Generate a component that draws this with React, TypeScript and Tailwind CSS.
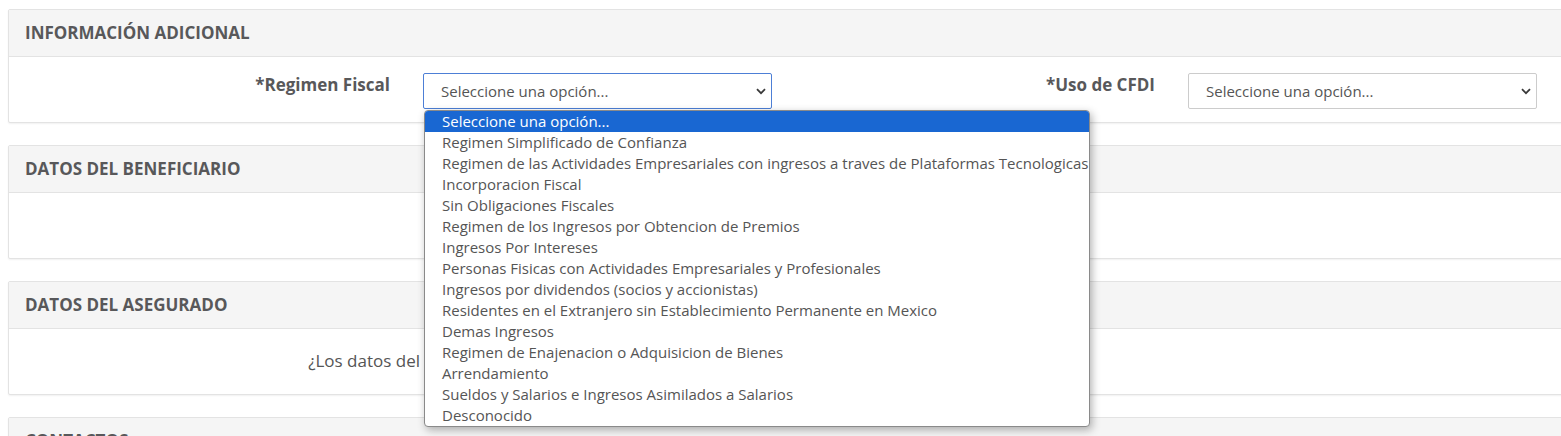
import React from 'react';

const options = [
  'Seleccione una opción...',
  'Regimen Simplificado de Confianza',
  'Regimen de las Actividades Empresariales con ingresos a traves de Plataformas Tecnologicas',
  'Incorporacion Fiscal',
  'Sin Obligaciones Fiscales',
  'Regimen de los Ingresos por Obtencion de Premios',
  'Ingresos Por Intereses',
  'Personas Fisicas con Actividades Empresariales y Profesionales',
  'Ingresos por dividendos (socios y accionistas)',
  'Residentes en el Extranjero sin Establecimiento Permanente en Mexico',
  'Demas Ingresos',
  'Regimen de Enajenacion o Adquisicion de Bienes',
  'Arrendamiento',
  'Sueldos y Salarios e Ingresos Asimilados a Salarios',
  'Desconocido',
];

const Chevron: React.FC = () => (
  <svg width="10" height="7" viewBox="0 0 10 7" className="shrink-0">
    <path d="M1 1.2 L5 5.2 L9 1.2" fill="none" stroke="#3a3a3a" strokeWidth="1.8" />
  </svg>
);

interface SelectProps {
  focused?: boolean;
  open?: boolean;
}

const FakeSelect: React.FC<SelectProps> = ({ focused, open }) => (
  <div className="relative">
    <div
      className={`h-[36px] w-[349px] flex items-center justify-between pl-[17px] pr-[5px] bg-white rounded-[2px] border text-[15px] text-[#555] ${
        focused ? 'border-[#4d7fd6]' : 'border-[#cccccc]'
      }`}
    >
      <span>Seleccione una opción...</span>
      <Chevron />
    </div>
    {open && (
      <div className="absolute z-10 left-[1px] top-[37px] w-[666px] bg-white border border-[#8a8a8a] rounded-[4px] overflow-hidden shadow-[2px_3px_8px_rgba(0,0,0,0.3)]">
        {options.map((opt, i) => (
          <div
            key={opt}
            className={`h-[21px] leading-[21px] pl-[17px] text-[15px] whitespace-nowrap ${
              i === 0 ? 'bg-[#1967d2] text-white' : 'text-[#555]'
            }`}
          >
            {opt}
          </div>
        ))}
      </div>
    )}
  </div>
);

const Panel: React.FC<{ title: string; children?: React.ReactNode }> = ({ title, children }) => (
  <div className="-mr-4 mb-[22px] bg-white border border-[#e3e3e3] rounded-[2px] shadow-[0_1px_2px_rgba(0,0,0,0.06)]">
    <div className="h-[47px] flex items-center pl-[16px] bg-[#f5f5f5] border-b border-[#e3e3e3] text-[17px] font-bold text-[#58585a] uppercase">
      {title}
    </div>
    <div className="h-[65px]">{children}</div>
  </div>
);

export default function App() {
  return (
    <div
      className="h-[436px] overflow-hidden bg-white pt-[9px] pl-[8px]"
      style={{ fontFamily: '"Open Sans", "Noto Sans", sans-serif' }}
    >
      <Panel title="Información adicional">
        <div className="flex items-start pt-[16px]">
          <div className="w-[399px] pr-[18px] text-right text-[17px] leading-[24px] font-bold text-[#58585a]">
            *Regimen Fiscal
          </div>
          <div className="w-[379px] pl-[15px]">
            <FakeSelect focused open />
          </div>
          <div className="w-[386px] pr-[18px] text-right text-[17px] leading-[24px] font-bold text-[#58585a]">
            *Uso de CFDI
          </div>
          <div className="w-[379px] pl-[15px]">
            <FakeSelect />
          </div>
        </div>
      </Panel>

      <Panel title="Datos del beneficiario" />

      <Panel title="Datos del asegurado">
        <div className="flex items-center h-full pb-[2px]">
          <div className="w-[411px] text-right text-[17px] text-[#555] whitespace-nowrap">
            ¿Los datos del
          </div>
        </div>
      </Panel>

      <Panel title="Contactos" />
    </div>
  );
}
